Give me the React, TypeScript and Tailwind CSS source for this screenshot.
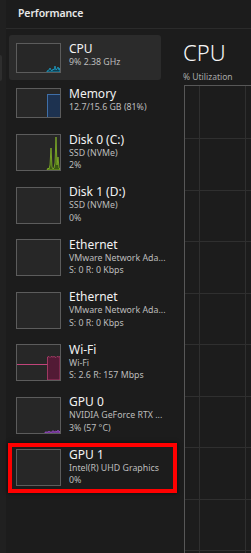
import React from 'react';

type Item = {
  title: string;
  lines: string[];
  graph?: React.ReactNode;
  selected?: boolean;
  height: string;
};

function Thumb({ tall, children }: { tall: boolean; children?: React.ReactNode }) {
  return (
    <div
      className={`w-[45px] shrink-0 border border-[#5c5c5c] bg-[#272727] overflow-hidden ${
        tall ? 'h-[37px]' : 'h-[30px]'
      }`}
    >
      {children}
    </div>
  );
}

const cpuGraph = (
  <svg width="43" height="28" viewBox="0 0 43 28">
    <path d="M30 28 L30 27 L32 26 L33 24 L34 26 L35 27 L36 25 L37 26 L38 22 L39 26 L40 25 L41 23 L42 26 L43 24 L43 28 Z" fill="#0d3f52" stroke="#1f9fc6" strokeWidth="0.8" />
  </svg>
);

const memGraph = (
  <svg width="43" height="28" viewBox="0 0 43 28">
    <rect x="30.5" y="5.5" width="13" height="23" fill="#1d3250" stroke="#3f6fa8" strokeWidth="1" />
  </svg>
);

const diskGraph = (
  <svg width="43" height="35" viewBox="0 0 43 35">
    <path d="M30 35 L31 33 L32 34 L33 30 L34 13 L35 32 L36 34 L37 33 L38 28 L39 2 L40 30 L41 22 L42 33 L43 34 L43 35 Z" fill="#3a5a12" stroke="#86b82a" strokeWidth="0.8" />
  </svg>
);

const wifiGraph = (
  <svg width="43" height="35" viewBox="0 0 43 35">
    <line x1="0" y1="19.5" x2="43" y2="19.5" stroke="#c0447a" strokeWidth="1" />
    <path d="M30.5 35 L30.5 12 L32 11.5 L33 12.5 L34 11.5 L36 12 L37 11.5 L39 12.5 L40 11.5 L42 12 L43 11.5 L43 35 Z" fill="#521a35" stroke="#b8406f" strokeWidth="0.8" />
  </svg>
);

const gpuGraph = (
  <svg width="43" height="35" viewBox="0 0 43 35">
    <path d="M28 35 L28 34 L31 34 L32 33 L33 34 L35 34 L36 32.5 L37 34 L39 33 L40 34 L41 32 L42 34 L43 33 L43 35 Z" fill="#5a2a78" stroke="#a050d0" strokeWidth="0.7" />
  </svg>
);

const items: Item[] = [
  { title: 'CPU', lines: ['9%  2.38 GHz'], graph: cpuGraph, selected: true, height: 'h-[45px]' },
  { title: 'Memory', lines: ['12.7/15.6 GB (81%)'], graph: memGraph, height: 'h-[46px]' },
  { title: 'Disk 0 (C:)', lines: ['SSD (NVMe)', '2%'], graph: diskGraph, height: 'h-[52.5px]' },
  { title: 'Disk 1 (D:)', lines: ['SSD (NVMe)', '0%'], height: 'h-[52.5px]' },
  { title: 'Ethernet', lines: ['VMware Network Ada...', 'S: 0 R: 0 Kbps'], height: 'h-[52.5px]' },
  { title: 'Ethernet', lines: ['VMware Network Ada...', 'S: 0 R: 0 Kbps'], height: 'h-[52.5px]' },
  { title: 'Wi-Fi', lines: ['Wi-Fi', 'S: 2.6 R: 157 Mbps'], graph: wifiGraph, height: 'h-[52.5px]' },
  { title: 'GPU 0', lines: ['NVIDIA GeForce RTX ...', '3% (57 °C)'], graph: gpuGraph, height: 'h-[52.5px]' },
  { title: 'GPU 1', lines: ['Intel(R) UHD Graphics', '0%'], height: 'h-[52.5px]' },
];

const hLines = [52, 103.5, 155, 206.5, 258, 309.5, 361, 412.5, 464];

export default function App() {
  return (
    <div
      className="relative flex w-[251px] h-[553px] overflow-hidden bg-[#1c1c1c] text-[#f0f0f0]"
      style={{ fontFamily: '"Noto Sans", "Open Sans", sans-serif' }}
    >
      {/* nav strip */}
      <div className="w-[6px] shrink-0 bg-[#202020] pt-[55px]">
        <div className="w-[2px] h-[26px] rounded-r-[2px] bg-[#2e2e2e]" />
      </div>

      <div className="flex-1 flex flex-col min-w-0">
        {/* header */}
        <div className="h-[29px] shrink-0 border-b border-[#2b2b2b] pl-[12px] flex items-center">
          <span className="text-[10.5px] font-semibold tracking-[-0.1px] text-[#e8e8e8]">Performance</span>
        </div>

        <div className="flex flex-1 min-h-0">
          {/* device list */}
          <div className="w-[155px] shrink-0 pt-[6px] pl-[3px]">
            {items.map((it, i) => (
              <div
                key={i}
                className={`${it.height} flex gap-[8px] pl-[7px] pt-[8px] rounded-[3px] ${
                  it.selected ? 'bg-[#2b2b2b]' : ''
                }`}
              >
                <Thumb tall={it.lines.length > 1}>{it.graph}</Thumb>
                <div className="-mt-[2.5px] min-w-0 whitespace-nowrap">
                  <div className="text-[12px] leading-[15px] text-[#f2f2f2]">{it.title}</div>
                  {it.lines.map((l, j) => (
                    <div key={j} className="text-[8.8px] leading-[12.5px] text-[#bdbdbd]">
                      {l}
                    </div>
                  ))}
                </div>
              </div>
            ))}
          </div>

          {/* detail pane */}
          <div className="flex-1 pl-[22px] pt-[10px] min-w-0">
            <div className="text-[22px] leading-[26px] font-light text-[#f5f5f5]">CPU</div>
            <div className="mt-[6px] text-[8.5px] leading-[11px] text-[#a8a8a8] whitespace-nowrap">% Utilization</div>
            <div className="mt-[3px] ml-[1px] w-[300px] h-[520px] border border-[#575757] relative">
              <svg width="300" height="520" className="absolute inset-0">
                <line x1="14.5" y1="0" x2="14.5" y2="520" stroke="#2f2f2f" strokeWidth="1" />
                <line x1="60.5" y1="0" x2="60.5" y2="520" stroke="#2f2f2f" strokeWidth="1" />
                {hLines.map((y) => (
                  <line key={y} x1="0" y1={Math.round(y) + 0.5} x2="300" y2={Math.round(y) + 0.5} stroke="#2f2f2f" strokeWidth="1" />
                ))}
              </svg>
            </div>
          </div>
        </div>
      </div>

      {/* annotation box */}
      <div className="absolute left-[8px] top-[443px] w-[169px] h-[50px] border-4 border-[#ff0000] shadow-[0_0_4px_rgba(0,0,0,0.7)]" />
    </div>
  );
}
